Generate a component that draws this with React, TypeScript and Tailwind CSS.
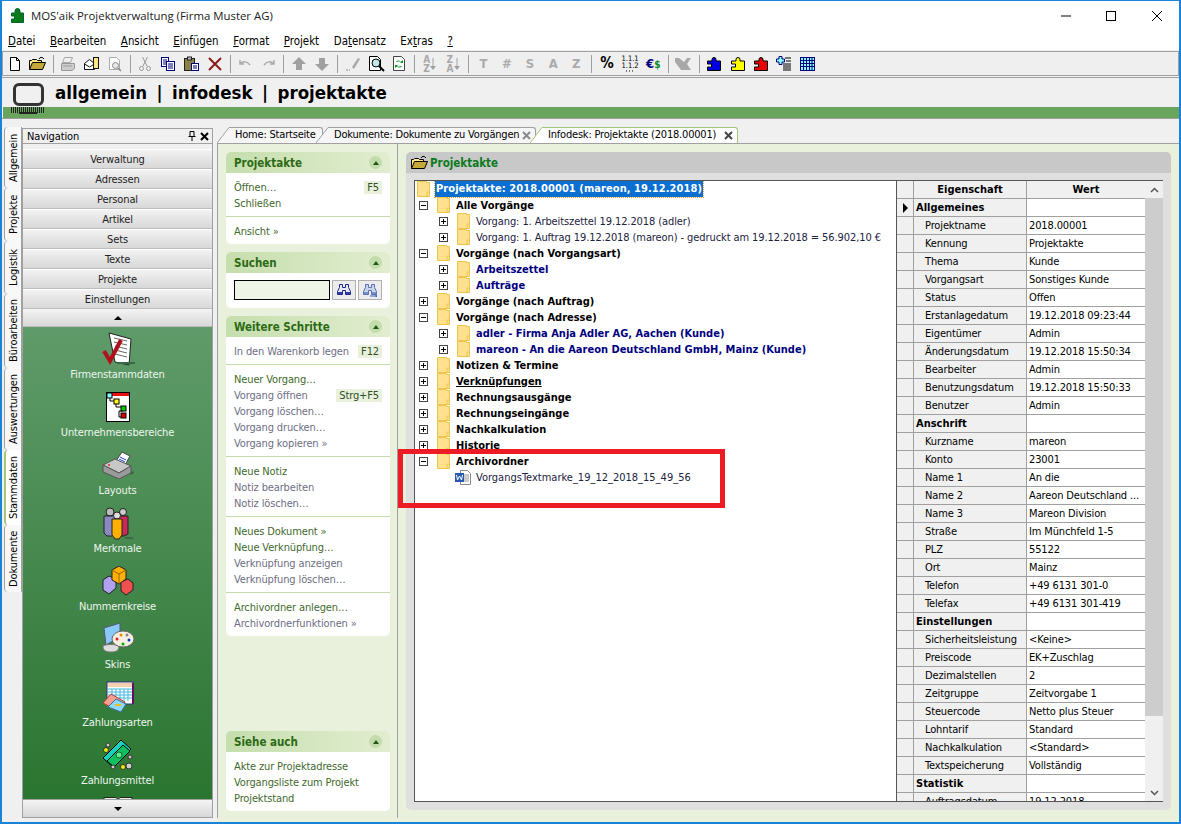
import React from 'react';

const ui = "font-['DejaVu_Sans_Condensed','DejaVu_Sans',sans-serif]";

// toolbar icons, all about 16x16
const Doc = () => (
  <svg width="16" height="16" viewBox="0 0 16 16"><path d="M3.5 1.5h6l3 3v10h-9z" fill="#fff" stroke="#000" /><path d="M9.5 1.5v3h3" fill="none" stroke="#000" /></svg>
);
const OpenFolder = () => (
  <svg width="17" height="16" viewBox="0 0 17 16"><path d="M.5 13.5v-9h2l1-1h4l1 1h4v2" fill="#ffe680" stroke="#000" /><path d="M.5 13.5l3-7h13l-3 7z" fill="#c6a83a" stroke="#000" /><path d="M10 3c1-2 3-2 4-1l1 1" fill="none" stroke="#000" /></svg>
);
const Printer = () => (
  <svg width="16" height="16" viewBox="0 0 16 16"><path d="M4.5 1.5h8l-2 5h-8z" fill="#eee" stroke="#aaa" /><path d="M1.5 7.5h13v5l-2 2h-11z" fill="#ccc" stroke="#999" /><path d="M3 10h9" stroke="#999" /></svg>
);
const Mail = () => (
  <svg width="17" height="16" viewBox="0 0 17 16"><path d="M1.5 7.5l5-4 5 4v6h-10z" fill="#fff" stroke="#111" /><path d="M1.5 8l5 3 5-3" fill="none" stroke="#111" /><rect x="10.5" y="1.5" width="5" height="11" fill="#ffe680" stroke="#111" /></svg>
);
const Preview = () => (
  <svg width="16" height="16" viewBox="0 0 16 16"><path d="M2.5 1.5h7l3 3v9h-10z" fill="#fff" stroke="#aaa" /><circle cx="8.5" cy="9.5" r="3" fill="#e8e8e8" stroke="#888" /><path d="M11 12l3 3" stroke="#888" strokeWidth="1.5" /></svg>
);
const Cut = () => (
  <svg width="16" height="16" viewBox="0 0 16 16" fill="none" stroke="#999"><path d="M5.5 1l4.500 9M10.500 1L6 10" /><circle cx="4.5" cy="12.5" r="2" /><circle cx="11.5" cy="12.5" r="2" /></svg>
);
const Copy = () => (
  <svg width="16" height="16" viewBox="0 0 16 16"><rect x="1.5" y="1.5" width="7" height="9" fill="#fff" stroke="#000080" /><path d="M3 4h4M3 6h4M3 8h4" stroke="#000080" /><rect x="6.5" y="5.5" width="8" height="9" fill="#fff" stroke="#000080" /><path d="M8 8h5M8 10h5M8 12h5" stroke="#000080" /></svg>
);
const Paste = () => (
  <svg width="17" height="16" viewBox="0 0 17 16"><rect x="1.5" y="2.5" width="10" height="12" fill="#8a8244" stroke="#222" /><rect x="4.5" y="1" width="4" height="3" fill="#bbb" stroke="#222" /><rect x="8.5" y="7.5" width="7" height="7" fill="#fff" stroke="#000080" /><path d="M10 10h4M10 12h4" stroke="#000080" /></svg>
);
const Del = () => (
  <svg width="16" height="16" viewBox="0 0 16 16"><path d="M2 2l12 12M14 2L2 14" stroke="#8b1a1a" strokeWidth="2" /></svg>
);
const Undo = () => (
  <svg width="16" height="16" viewBox="0 0 16 16" fill="none" stroke="#aaa"><path d="M3 4v4h4M3 8c3-3 7-3 10 1" strokeWidth="1.5" /></svg>
);
const Redo = () => (
  <svg width="16" height="16" viewBox="0 0 16 16" fill="none" stroke="#aaa"><path d="M13 4v4H9M13 8c-3-3-7-3-10 1" strokeWidth="1.5" /></svg>
);
const Up = () => (
  <svg width="16" height="16" viewBox="0 0 16 16"><path d="M8 1l7 7h-4v6H5V8H1z" fill="#a0a0a0" /></svg>
);
const Down = () => (
  <svg width="16" height="16" viewBox="0 0 16 16"><path d="M8 15l7-7h-4V2H5v6H1z" fill="#a0a0a0" /></svg>
);
const Pencil = () => (
  <svg width="16" height="16" viewBox="0 0 16 16"><path d="M7 11l6-9 2 1-6 10z" fill="#aaa" /><path d="M1 14h2M4 14h1" stroke="#888" /></svg>
);
const Find = () => (
  <svg width="17" height="17" viewBox="0 0 17 17"><path d="M1.5 1.5h8l3 3v11h-11z" fill="#fff" stroke="#000" /><circle cx="8" cy="8" r="4" fill="#bfe8e8" stroke="#000" /><path d="M11 11l5 5" stroke="#000" strokeWidth="2" /></svg>
);
const Refresh = () => (
  <svg width="16" height="17" viewBox="0 0 16 17"><path d="M2.5 1.5h8l3 3v11h-11z" fill="#fff" stroke="#444" /><path d="M5 7c1-2 4-2 5 0l-1 1h3V5l-1 1M11 11c-1 2-4 2-5 0l1-1H4v3l1-1" fill="#0a9a2a" /></svg>
);
const SortAZ = ({ a, b }: { a: string; b: string }) => (
  <span className="flex items-center text-[#a8a8a8]">
    <span className="flex flex-col text-[10px] leading-[9px] font-bold"><span>{a}</span><span>{b}</span></span>
    <svg width="6" height="16" viewBox="0 0 6 16"><path d="M3 2v9" stroke="#a0a0a0" /><path d="M0 10h6l-3 4z" fill="#a0a0a0" /></svg>
  </span>
);
const Letter = ({ c }: { c: string }) => <span className="text-[13px] font-bold text-[#ababab]">{c}</span>;
const Percent = () => <span className="text-[15px] leading-none font-bold text-black">%</span>;
const Decimals = () => (
  <span className="flex flex-col items-center text-[7.5px] leading-[7px] text-black">
    <span>1.1.1</span>
    <span>1.1.2</span>
    <svg width="10" height="2" viewBox="0 0 10 2" className="mt-px"><path d="M1 1h1M4 1h1M7 1h1" stroke="#000" /></svg>
  </span>
);
const Currency = () => (
  <span className="flex items-baseline font-bold"><span className="text-[13px] text-[#000080]">€</span><span className="text-[10px] text-[#0a8a2a]">$</span></span>
);
const Fold = () => (
  <svg width="17" height="14" viewBox="0 0 17 14"><path d="M0 1h4l5 4 3-4h4l-4 6 4 6H6L0 5z" fill="#a8a8a8" /></svg>
);
const Puzzle = ({ fill }: { fill: string }) => (
  <svg width="14" height="15" viewBox="0 0 14 15"><path d="M5 5V3.5a2 2 0 1 1 4 0V5h4.500v9.500H.5V11h4V8h-4V5z" fill={fill} stroke="#000" /></svg>
);
const ListAdd = () => (
  <svg width="15" height="15" viewBox="0 0 15 15"><path d="M3 .5h3V3h2.500v3H6v2.500H3V6H.5V3H3z" fill="#8ff" stroke="#000080" /><path d="M9 2h6M10 5h5M7 8h8M7 10h8M7 12h8M7 14h8" stroke="#000" /></svg>
);
const GridIcon = () => (
  <svg width="15" height="14" viewBox="0 0 15 14"><rect x=".5" y=".5" width="14" height="13" fill="#8ff" stroke="#000080" /><path d="M.5 3.5h14M.5 6.5h14M.5 9.5h14M3.5.5v13M6.5.5v13M9.500.5v13M12 .5v13" stroke="#000080" /></svg>
);
const AppPuzzle = () => (
  <svg width="13" height="15" viewBox="0 0 13 15"><path d="M4 5V3a2.500 2.500 0 1 1 5 0v2h3.500v9.500H.5V11h3V8h-3V5z" fill="#0b7a1a" stroke="#063" /></svg>
);

type ToolItem = React.ReactNode | null;
const toolbar: ToolItem[] = [
  <Doc />, <OpenFolder />, null, <Printer />, <Mail />, <Preview />, null, <Cut />, <Copy />, <Paste />, <Del />, null,
  <Undo />, <Redo />, null, <Up />, <Down />, null, <Pencil />, <Find />, <Refresh />, null,
  <SortAZ a="A" b="Z" />, <SortAZ a="Z" b="A" />, null, <Letter c="T" />, <Letter c="#" />, <Letter c="S" />, <Letter c="A" />, <Letter c="Z" />, null,
  <Percent />, <Decimals />, <Currency />, null, <Fold />, null, <Puzzle fill="#0000e0" />, <Puzzle fill="#ffff00" />, <Puzzle fill="#e80000" />, <ListAdd />, <GridIcon />,
];

const menus: [string, string, string][] = [
  ['', 'D', 'atei'], ['', 'B', 'earbeiten'], ['', 'A', 'nsicht'], ['', 'E', 'infügen'], ['', 'F', 'ormat'],
  ['', 'P', 'rojekt'], ['Da', 't', 'ensatz'], ['Ex', 't', 'ras'], ['', '?', ''],
];

const sideTabs = [
  { label: 'Allgemein', h: 'h-[61px]', active: false },
  { label: 'Projekte', h: 'h-[53px]', active: false },
  { label: 'Logistik', h: 'h-[53px]', active: false },
  { label: 'Büroarbeiten', h: 'h-[74px]', active: false },
  { label: 'Auswertungen', h: 'h-[82px]', active: false },
  { label: 'Stammdaten', h: 'h-[75px]', active: true },
  { label: 'Dokumente', h: 'h-[67px]', active: false },
];

const navButtons = ['Verwaltung', 'Adressen', 'Personal', 'Artikel', 'Sets', 'Texte', 'Projekte', 'Einstellungen'];

// big icons in the navigation list
const BigCheck = () => (
  <svg width="34" height="34" viewBox="0 0 34 34"><path d="M8 1l22 6-2 26-14-3z" fill="#fff" stroke="#222" /><path d="M13 6l13 3M13 10l13 3M14 14l12 3M14 18l12 3M14 22l12 3" stroke="#666" /><path d="M3 19l6 10L20 8" fill="none" stroke="#b0101a" strokeWidth="4" /><path d="M16 31h18" stroke="#3a6a45" strokeWidth="2" /></svg>
);
const BigOrg = () => (
  <svg width="24" height="30" viewBox="0 0 24 30"><rect x=".5" y=".5" width="23" height="29" fill="#fff" stroke="#000" /><rect x="1" y="1" width="22" height="3" fill="#e81010" /><path d="M4 5v4h6v6h7v4h-4v6h4" fill="none" stroke="#000" /><rect x="1" y="1" width="5" height="5" fill="#8ff" stroke="#000" /><rect x="8" y="7" width="5" height="5" fill="#ff0" stroke="#000" /><rect x="15" y="14" width="5" height="5" fill="#0c0" stroke="#000" /><rect x="15" y="21" width="5" height="5" fill="#d00" stroke="#000" /></svg>
);
const BigPrinter = () => (
  <svg width="32" height="28" viewBox="0 0 32 28"><path d="M14 10l6-9 8 4-5 9z" fill="#fff" stroke="#444" /><path d="M18 6l6 3M17 8l6 3" stroke="#2040d0" /><path d="M1 14l12-6 16 7-12 7z" fill="#c8c8c8" stroke="#555" /><path d="M1 14v7l16 7 12-6v-7l-12 7z" fill="#9a9a9a" stroke="#555" /><circle cx="7" cy="14" r="1" fill="#d22" /><path d="M28 23l4-2" stroke="#3a6a45" strokeWidth="2" /></svg>
);
const BigPeople = () => (
  <svg width="30" height="33" viewBox="0 0 30 33"><circle cx="7" cy="5" r="4" fill="#bbb" stroke="#222" /><path d="M1 9h11v17l-3 3H4l-3-3z" fill="#8a8ac0" stroke="#222" /><circle cx="20" cy="5" r="3.5" fill="#ccc" stroke="#222" /><path d="M15 9h10v18l-4 2h-3z" fill="#c82a5a" stroke="#222" /><circle cx="14" cy="8.5" r="3.5" fill="#ddd" stroke="#222" /><path d="M9 12h10v16l-3 4h-4l-3-4z" fill="#ffb000" stroke="#222" /><path d="M22 31h8" stroke="#3a6a45" strokeWidth="2" /></svg>
);
const BigCubes = () => (
  <svg width="32" height="30" viewBox="0 0 32 30"><path d="M1 14l6-4 7 3v9l-7 6-6-4z" fill="#b0a0f0" stroke="#222" /><path d="M19 16l7-3 5 4v7l-7 5-5-4z" fill="#f05050" stroke="#222" /><path d="M10 4l7-4 7 4v9l-7 5-7-4z" fill="#ffb000" stroke="#222" /><path d="M10 4l7 4 7-4M17 8v10" fill="none" stroke="#a06000" /></svg>
);
const BigPalette = () => (
  <svg width="32" height="32" viewBox="0 0 32 32"><path d="M2 5l16-5v14L4 22z" fill="#8ac8f8" stroke="#557" /><path d="M1 23c2-2 14-2 16 0 0 4-2 6-8 6s-8-2-8-6z" fill="#ddd" stroke="#777" /><ellipse cx="21" cy="16" rx="11" ry="8" fill="#f4efe0" stroke="#666" /><circle cx="15" cy="16" r="1.5" fill="#d22" /><circle cx="19" cy="12" r="1.5" fill="#e80" /><circle cx="25" cy="12" r="1.5" fill="#888" /><circle cx="27" cy="17" r="1.5" fill="#13c" /><circle cx="21" cy="21" r="1.5" fill="#0a0" /></svg>
);
const BigCalendar = () => (
  <svg width="32" height="32" viewBox="0 0 32 32"><rect x="5" y="1" width="26" height="22" fill="#fff" stroke="#303080" /><rect x="6" y="2" width="24" height="4" fill="#f2d0b0" /><path d="M6 8h24M6 11h24M6 14h24M6 17h24M10 8v12M14 8v12M18 8v12M22 8v12M26 8v12" stroke="#40b8e0" /><path d="M31 2v21" stroke="#601060" strokeWidth="2" /><path d="M1 22l8-9 14 8-5 10z" fill="#f8a090" stroke="#b04040" /><path d="M6 26l8-8 10 5-5 8z" fill="#90d8f8" stroke="#3070a0" /><path d="M13 24h6" stroke="#e8c020" strokeWidth="2" /></svg>
);
const BigMoney = () => (
  <svg width="32" height="32" viewBox="0 0 32 32"><path d="M1 19L19 1l10 9-18 18z" fill="#18d0c0" stroke="#000" /><path d="M5 22L21 6l7 6-16 16z" fill="#10c060" stroke="#000" /><circle cx="17" cy="16" r="3" fill="#60e890" stroke="#0a6a30" /><circle cx="6" cy="6" r="2" fill="#ccc" stroke="#333" /><circle cx="4" cy="11" r="2.5" fill="#ee0" stroke="#333" /><circle cx="28" cy="18" r="2" fill="#ccc" stroke="#333" /><circle cx="11" cy="28" r="2" fill="#ccc" stroke="#333" /><circle cx="21" cy="28" r="2.5" fill="#ee0" stroke="#333" /><circle cx="27" cy="27" r="3" fill="#ccc" stroke="#333" /></svg>
);

const navItems: [string, React.ReactNode][] = [
  ['Firmenstammdaten', <BigCheck />],
  ['Unternehmensbereiche', <BigOrg />],
  ['Layouts', <BigPrinter />],
  ['Merkmale', <BigPeople />],
  ['Nummernkreise', <BigCubes />],
  ['Skins', <BigPalette />],
  ['Zahlungsarten', <BigCalendar />],
  ['Zahlungsmittel', <BigMoney />],
];

const Collapse = () => (
  <span className="flex h-[13px] w-[13px] items-center justify-center rounded-full bg-[#c3dcab]">
    <span className="h-0 w-0 border-x-[3px] border-b-[4px] border-x-transparent border-b-[#1f5a10]" />
  </span>
);

const Card = ({ title, children }: { title: string; children: React.ReactNode }) => (
  <div className="w-[164px] overflow-hidden rounded-[5px] bg-white">
    <div className="flex h-[21px] items-center justify-between bg-gradient-to-r from-[#c5dead] to-[#e2edd0] px-2 text-[11.5px] font-bold tracking-normal text-[#2c6a14]">
      <span className="pt-[2px]">{title}</span>
      <Collapse />
    </div>
    {children}
  </div>
);

const Link = ({ off, children, kbd }: { off?: boolean; children: React.ReactNode; kbd?: string }) => (
  <div className={`flex h-[16px] items-center justify-between px-2 ${off ? 'text-[#6e6e84]' : 'text-[#3f6a2d]'}`}>
    <span className="pt-[2px]">{children}</span>
    {kbd && <span className="bg-[#e9f1dd] px-[3px] leading-[13px] text-[#30502a]">{kbd}</span>}
  </div>
);

const CardDivider = () => <div className="mb-[6px] mt-[5px] h-px bg-[#c3dcab]" />;

const Binoculars = ({ arrow }: { arrow?: boolean }) => (
  <svg width="16" height="14" viewBox="0 0 16 14">
    <path d="M3.5 1.5h3v3h3v-3h3v3l2 4v3h-5v-4h-3v4h-5v-3l2-4z" fill={arrow ? '#c8d4ec' : '#e8e8f4'} stroke={arrow ? '#5a70b0' : '#202890'} />
    <path d="M2 9h4v2H2zM10 9h4v2h-4z" fill={arrow ? '#7a90c8' : '#3040a8'} />
    {arrow && <path d="M8 13h7M13 11.500l2 1.500-2 1.500" fill="none" stroke="#3060c0" />}
  </svg>
);

const Folder = () => (
  <svg width="13" height="16" viewBox="0 0 13 16" className="shrink-0"><path d="M.5.5h9v1h3v14H.5z" fill="#ffe08f" stroke="#eec54a" /><path d="M10 15v-4h2.500" fill="none" stroke="#eec54a" /></svg>
);

const Expander = ({ open }: { open: boolean }) => (
  <span className="flex h-[9px] w-[9px] shrink-0 items-center justify-center border border-[#444] bg-white">
    <span className="relative h-px w-[5px] bg-black">
      {!open && <span className="absolute left-[2px] top-[-2px] h-[5px] w-px bg-black" />}
    </span>
  </span>
);

type Node = { t: string; lvl: 1 | 2; open?: boolean; kind: 'head' | 'blue' | 'plain'; u?: boolean };
const tree: Node[] = [
  { t: 'Alle Vorgänge', lvl: 1, open: true, kind: 'head' },
  { t: 'Vorgang: 1. Arbeitszettel 19.12.2018 (adler)', lvl: 2, kind: 'plain' },
  { t: 'Vorgang: 1. Auftrag 19.12.2018 (mareon) - gedruckt am 19.12.2018 = 56.902,10 €', lvl: 2, kind: 'plain' },
  { t: 'Vorgänge (nach Vorgangsart)', lvl: 1, open: true, kind: 'head' },
  { t: 'Arbeitszettel', lvl: 2, kind: 'blue' },
  { t: 'Aufträge', lvl: 2, kind: 'blue' },
  { t: 'Vorgänge (nach Auftrag)', lvl: 1, kind: 'head' },
  { t: 'Vorgänge (nach Adresse)', lvl: 1, open: true, kind: 'head' },
  { t: 'adler - Firma Anja Adler AG, Aachen (Kunde)', lvl: 2, kind: 'blue' },
  { t: 'mareon - An die Aareon Deutschland GmbH, Mainz (Kunde)', lvl: 2, kind: 'blue' },
  { t: 'Notizen & Termine', lvl: 1, kind: 'head' },
  { t: 'Verknüpfungen', lvl: 1, kind: 'head', u: true },
  { t: 'Rechnungsausgänge', lvl: 1, kind: 'head' },
  { t: 'Rechnungseingänge', lvl: 1, kind: 'head' },
  { t: 'Nachkalkulation', lvl: 1, kind: 'head' },
  { t: 'Historie', lvl: 1, kind: 'head' },
  { t: 'Archivordner', lvl: 1, open: true, kind: 'head' },
];

const nodeText = {
  head: 'font-bold tracking-normal text-black',
  blue: 'font-bold tracking-normal text-[#00007f]',
  plain: 'tracking-[-0.09px] text-[#1c2240]',
};

type Row = { k: string; v?: string; head?: boolean };
const props: Row[] = [
  { k: 'Allgemeines', head: true },
  { k: 'Projektname', v: '2018.00001' }, { k: 'Kennung', v: 'Projektakte' }, { k: 'Thema', v: 'Kunde' },
  { k: 'Vorgangsart', v: 'Sonstiges Kunde' }, { k: 'Status', v: 'Offen' }, { k: 'Erstanlagedatum', v: '19.12.2018 09:23:44' },
  { k: 'Eigentümer', v: 'Admin' }, { k: 'Änderungsdatum', v: '19.12.2018 15:50:34' }, { k: 'Bearbeiter', v: 'Admin' },
  { k: 'Benutzungsdatum', v: '19.12.2018 15:50:33' }, { k: 'Benutzer', v: 'Admin' },
  { k: 'Anschrift', head: true },
  { k: 'Kurzname', v: 'mareon' }, { k: 'Konto', v: '23001' }, { k: 'Name 1', v: 'An die' }, { k: 'Name 2', v: 'Aareon Deutschland ...' },
  { k: 'Name 3', v: 'Mareon Division' }, { k: 'Straße', v: 'Im Münchfeld 1-5' }, { k: 'PLZ', v: '55122' }, { k: 'Ort', v: 'Mainz' },
  { k: 'Telefon', v: '+49 6131 301-0' }, { k: 'Telefax', v: '+49 6131 301-419' },
  { k: 'Einstellungen', head: true },
  { k: 'Sicherheitsleistung', v: '<Keine>' }, { k: 'Preiscode', v: 'EK+Zuschlag' }, { k: 'Dezimalstellen', v: '2' },
  { k: 'Zeitgruppe', v: 'Zeitvorgabe 1' }, { k: 'Steuercode', v: 'Netto plus Steuer' }, { k: 'Lohntarif', v: 'Standard' },
  { k: 'Nachkalkulation', v: '<Standard>' }, { k: 'Textspeicherung', v: 'Vollständig' },
  { k: 'Statistik', head: true },
  { k: 'Auftragsdatum', v: '19.12.2018' },
];

const CloseX = ({ dark }: { dark?: boolean }) => (
  <svg width="9" height="9" viewBox="0 0 9 9"><path d="M1 1l7 7M8 1L1 8" stroke={dark ? '#444' : '#8a8a8a'} strokeWidth="2" /></svg>
);

const Tab = ({ label, w, active, close }: { label: string; w: string; active?: boolean; close?: boolean }) => (
  <div className={`flex h-[16px] items-center ${w}`}>
    <svg width="14" height="16" viewBox="0 0 14 16" className="shrink-0">
      <path d="M0 16L12 .5h2V16z" fill={active ? '#ffffff' : '#f6f6f6'} />
      <path d="M0 16L12 .5h2" fill="none" stroke={active ? '#a3c77a' : '#a0a0a0'} />
    </svg>
    <div className={`flex h-full flex-1 items-center justify-between rounded-tr-[3px] border-t border-r pl-[4px] pr-[4px] ${active ? 'border-[#a3c77a] bg-white' : 'border-[#a0a0a0] bg-[#f6f6f6]'}`}>
      <span className="whitespace-nowrap tracking-[-0.2px]">{label}</span>
      {close && <CloseX dark={active} />}
    </div>
  </div>
);

export default function App() {
  return (
    <div className={`flex h-[824px] w-[1181px] flex-col overflow-hidden border-x-2 border-t border-b-2 border-[#1883d7] bg-[#f0f0f0] text-[11px] tracking-[-0.13px] text-black ${ui}`}>
      {/* title bar */}
      <div className="flex h-[29px] shrink-0 items-center bg-white pl-[9px] font-['Open_Sans',sans-serif] tracking-normal text-[#222]">
        <AppPuzzle />
        <span className="ml-[7px] text-[11.4px]">MOS'aik Projektverwaltung (Firma Muster AG)</span>
        <div className="ml-auto flex items-center">
          <svg width="45" height="10" viewBox="0 0 45 10"><path d="M0 5h10" stroke="#000" /></svg>
          <svg width="46" height="10" viewBox="0 0 46 10"><rect x=".5" y=".5" width="9" height="9" fill="none" stroke="#000" /></svg>
          <svg width="27" height="10" viewBox="0 0 27 10"><path d="M0 0l10 10M10 0L0 10" stroke="#000" /></svg>
        </div>
      </div>

      {/* menu */}
      <div className="flex h-[20px] shrink-0 items-center gap-[14.6px] bg-white pl-[6px] pt-[4px] text-[11.4px] tracking-normal">
        {menus.map(([a, b, c]) => (
          <span key={a + b + c}>{a}<u>{b}</u>{c}</span>
        ))}
      </div>

      {/* toolbar */}
      <div className="mt-px flex h-[25px] shrink-0 items-center border border-[#a0a0a0] bg-[#efefef] tracking-normal">
        {toolbar.map((item, i) =>
          item === null ? (
            <span key={i} className="mx-[3.2px] h-[18px] w-px bg-[#a0a0a0]" />
          ) : (
            <span key={i} className="flex w-[23.2px] items-center justify-center">{item}</span>
          ),
        )}
      </div>

      {/* header band */}
      <div className="mt-px border-t border-[#a0a0a0]">
        <div className="flex h-[29px] items-center pl-[11px]">
          <span className="mt-[4px] h-[23px] w-[31px] rounded-[6px] border-[3px] border-[#333]" />
          <span className="ml-[11px] text-[18.5px] font-bold tracking-normal whitespace-pre [word-spacing:3.7px]">allgemein | infodesk | projektakte</span>
        </div>
        <div className="relative ml-px h-[11px] bg-[#69a55c]">
          <span className="absolute left-[8px] top-0 h-[6px] w-[34px] bg-[repeating-linear-gradient(90deg,#222_0,#222_1px,transparent_1px,transparent_2px)]" />
          <span className="absolute left-[16px] top-[5px] h-[2px] w-[18px] bg-[#222]" />
        </div>
      </div>

      {/* main */}
      <div className="flex min-h-0 flex-1 border-t border-[#a0a0a0]">
        {/* vertical tabs */}
        <div className="ml-[2px] mt-[8px] flex w-[18px] shrink-0 flex-col">
          {sideTabs.map((t) => (
            <div
              key={t.label}
              className={`flex ${t.h} w-[18px] rotate-180 items-center justify-center rounded-tr-[4px] rounded-br-[4px] border-y border-r border-[#a0a0a0] pr-[2px] [writing-mode:vertical-rl] ${t.active ? 'border-r-2 border-r-[#a3c77a] bg-white' : 'bg-[#f8f8f8]'}`}
            >
              {t.label}
            </div>
          ))}
        </div>

        {/* navigation */}
        <div className="mb-[4px] mt-[9px] flex w-[191px] shrink-0 flex-col border border-[#a0a0a0]">
          <div className="flex h-[15px] shrink-0 items-center justify-between border-b border-[#a0a0a0] pl-[4px] pr-[3px]">
            <span className="pt-[2px]">Navigation</span>
            <span className="flex items-center gap-[4px]">
              <svg width="8" height="10" viewBox="0 0 8 10"><path d="M2 .5h4v5H2zM.5 5.5h7M4 6v4" fill="none" stroke="#000" /></svg>
              <svg width="9" height="9" viewBox="0 0 9 9"><path d="M1 1l7 7M8 1L1 8" stroke="#000" strokeWidth="2" /></svg>
            </span>
          </div>
          <div className="mt-[5px] flex min-h-0 flex-1 flex-col">
            {navButtons.map((b) => (
              <div key={b} className="flex h-[20px] shrink-0 items-center justify-center border-b border-t border-b-[#bdbdbd] border-t-white bg-gradient-to-b from-[#f2f2f2] to-[#d8d8d8] pt-[2px] text-[#222]">
                {b}
              </div>
            ))}
            <div className="flex h-[18px] shrink-0 items-center justify-center border-b border-[#bdbdbd] bg-gradient-to-b from-[#f4f4f4] to-[#d8d8d8]">
              <span className="h-0 w-0 border-x-[4px] border-b-[4px] border-x-transparent border-b-black" />
            </div>
            <div className="flex min-h-0 flex-1 flex-col items-center overflow-hidden bg-gradient-to-b from-[#5f9b6a] to-[#2a7530] pt-[6px] text-[#eef6ee]">
              {navItems.map(([label, icon]) => (
                <div key={label} className="flex h-[58px] w-full shrink-0 flex-col items-center">
                  <span className="flex h-[32px] items-center justify-center">{icon}</span>
                  <span className="mt-[3px] leading-[14px]">{label}</span>
                </div>
              ))}
              <svg width="30" height="10" viewBox="0 0 30 10" className="shrink-0"><path d="M1 .5h12l2 2 2-2h12v10H1z" fill="#eee" stroke="#222" /></svg>
            </div>
            <div className="flex h-[18px] shrink-0 items-center justify-center border-t border-[#a0a0a0] bg-gradient-to-b from-[#f4f4f4] to-[#d8d8d8]">
              <span className="h-0 w-0 border-x-[4px] border-t-[4px] border-x-transparent border-t-black" />
            </div>
          </div>
        </div>

        {/* documents */}
        <div className="ml-[4px] mt-[8px] flex min-w-0 flex-1 flex-col">
          <div className="flex h-[16px] shrink-0">
            <Tab label="Home: Startseite" w="w-[106px]" />
            <div className="-ml-[7px]"><Tab label="Dokumente: Dokumente zu Vorgängen" w="w-[220px]" close /></div>
            <div className="-ml-[6px]"><Tab label="Infodesk: Projektakte (2018.00001)" w="w-[208px]" active close /></div>
          </div>
          <div className="relative flex min-h-0 flex-1 border-t border-[#a0a0a0] bg-[#e9f1dd] pb-[4px]">
            {/* task pane */}
            <div className="flex w-[181px] shrink-0 flex-col gap-[8px] border-x border-[#a0a0a0] pb-[7px] pl-[8px] pt-[8px]">
              <Card title="Projektakte">
                <div className="pb-[5px] pt-[6px]">
                  <Link kbd="F5">Öffnen…</Link>
                  <Link>Schließen</Link>
                  <CardDivider />
                  <Link>Ansicht »</Link>
                </div>
              </Card>
              <Card title="Suchen">
                <div className="flex items-center gap-[2px] pb-[8px] pl-[8px] pt-[7px]">
                  <span className="h-[20px] w-[96px] border border-black bg-[#eef5e6]" />
                  <span className="flex h-[20px] w-[24px] items-center justify-center border border-[#b0b0b0] bg-[#ececec]"><Binoculars /></span>
                  <span className="flex h-[20px] w-[24px] items-center justify-center border border-[#b0b0b0] bg-[#ececec]"><Binoculars arrow /></span>
                </div>
              </Card>
              <Card title="Weitere Schritte">
                <div className="pb-[5px] pt-[6px]">
                  <Link off kbd="F12">In den Warenkorb legen</Link>
                  <CardDivider />
                  <Link>Neuer Vorgang…</Link>
                  <Link off kbd="Strg+F5">Vorgang öffnen</Link>
                  <Link off>Vorgang löschen…</Link>
                  <Link off>Vorgang drucken…</Link>
                  <Link off>Vorgang kopieren »</Link>
                  <CardDivider />
                  <Link>Neue Notiz</Link>
                  <Link off>Notiz bearbeiten</Link>
                  <Link off>Notiz löschen…</Link>
                  <CardDivider />
                  <Link>Neues Dokument »</Link>
                  <Link>Neue Verknüpfung…</Link>
                  <Link off>Verknüpfung anzeigen</Link>
                  <Link off>Verknüpfung löschen…</Link>
                  <CardDivider />
                  <Link>Archivordner anlegen…</Link>
                  <Link off>Archivordnerfunktionen »</Link>
                </div>
              </Card>
              <div className="mt-auto">
                <Card title="Siehe auch">
                  <div className="pb-[5px] pt-[6px]">
                    <Link>Akte zur Projektadresse</Link>
                    <Link>Vorgangsliste zum Projekt</Link>
                    <Link>Projektstand</Link>
                  </div>
                </Card>
              </div>
            </div>

            {/* project panel */}
            <div className="mb-[8px] ml-[8px] mr-[8px] mt-[8px] flex min-w-0 flex-1 flex-col overflow-hidden rounded-[5px] bg-[#dfdfdf]">
              <div className="flex h-[21px] shrink-0 items-center gap-[2px] bg-[#c8c8c8] pl-[5px] text-[11.5px] font-bold tracking-normal text-[#0a7a1e]">
                <OpenFolder />
                <span className="pt-[2px]">Projektakte</span>
              </div>
              <div className="mx-[8px] mb-[8px] mt-[7px] flex min-h-0 flex-1 border border-[#555]">
                {/* tree */}
                <div className="w-[481px] shrink-0 overflow-hidden bg-white">
                  <div className="flex h-[16px] items-center pl-[2px]">
                    <Folder />
                    <span className="ml-[5px] bg-[#0a6fd0] px-[1px] font-bold tracking-[0.07px] text-white outline-1 outline-dotted outline-[#e8a030]">Projektakte: 2018.00001 (mareon, 19.12.2018)</span>
                  </div>
                  {tree.map((n) => (
                    <div key={n.t} className={`flex h-[16px] items-center whitespace-nowrap ${n.lvl === 1 ? 'pl-[4px]' : 'pl-[24px]'}`}>
                      <Expander open={!!n.open} />
                      <span className="ml-[9px] flex"><Folder /></span>
                      <span className={`ml-[6px] pt-[2px] ${nodeText[n.kind]} ${n.u ? 'underline' : ''}`}>{n.t}</span>
                    </div>
                  ))}
                  <div className="flex h-[16px] items-center pl-[40px]">
                    <svg width="16" height="15" viewBox="0 0 16 15"><path d="M5.5.5h7l3 3v11h-10z" fill="#fff" stroke="#888" /><path d="M8 5h6M8 7h6M8 9h6M8 11h6" stroke="#999" /><rect x="0" y="3" width="9" height="9" fill="#2a5ab0" /><path d="M1.5 5l1 5 2-4 2 4 1-5" fill="none" stroke="#fff" /></svg>
                    <span className="ml-[5px] pt-[2px] tracking-[0px] text-[#1c2240]">VorgangsTextmarke_19_12_2018_15_49_56</span>
                  </div>
                </div>

                {/* property grid */}
                <div className="flex min-w-0 flex-1 border-l border-[#555] bg-[#a8a8a8]">
                  <div className="w-[248px] shrink-0 overflow-hidden">
                    <div className="flex h-[18px] border-b border-[#a0a0a0] bg-[#f0f0f0] font-bold tracking-normal">
                      <span className="w-[17px] border-r border-[#a0a0a0]" />
                      <span className="flex w-[113px] items-center justify-center border-r border-[#a0a0a0] pt-[2px]">Eigenschaft</span>
                      <span className="flex flex-1 items-center justify-center pt-[2px]">Wert</span>
                    </div>
                    {props.map((r, i) => (
                      <div key={r.k} className="flex h-[18px] border-b border-[#a0a0a0] whitespace-nowrap">
                        <span className="flex w-[17px] items-center justify-center border-r border-[#a0a0a0] bg-[#f0f0f0]">
                          {i === 0 && <span className="h-0 w-0 border-y-[5px] border-l-[5px] border-y-transparent border-l-black" />}
                        </span>
                        <span className={`flex w-[113px] items-center border-r border-[#a0a0a0] bg-[#f0f0f0] pt-[2px] ${r.head ? 'pl-[2px] font-bold tracking-normal' : 'pl-[11px]'}`}>{r.k}</span>
                        <span className="flex flex-1 items-center bg-white pl-[2px] pt-[2px]">{r.v}</span>
                      </div>
                    ))}
                  </div>
                  <div className="flex w-[18px] shrink-0 flex-col bg-[#f0f0f0]">
                    <span className="flex h-[17px] items-center justify-center text-[#666]">
                      <svg width="9" height="6" viewBox="0 0 9 6"><path d="M1 5l3.5-3.500L8 5" fill="none" stroke="#555" strokeWidth="1.5" /></svg>
                    </span>
                    <span className="h-[518px] bg-[#cdcdcd]" />
                    <span className="flex-1" />
                    <span className="flex h-[17px] items-center justify-center">
                      <svg width="9" height="6" viewBox="0 0 9 6"><path d="M1 1l3.5 3.5L8 1" fill="none" stroke="#555" strokeWidth="1.5" /></svg>
                    </span>
                  </div>
                </div>
              </div>
            </div>

            {/* red marker drawn over the tree in the screenshot */}
            <div className="absolute left-[181px] top-[305px] h-[59px] w-[327px] border-[5px] border-[#ed1c24]" />
          </div>
        </div>
      </div>
    </div>
  );
}
